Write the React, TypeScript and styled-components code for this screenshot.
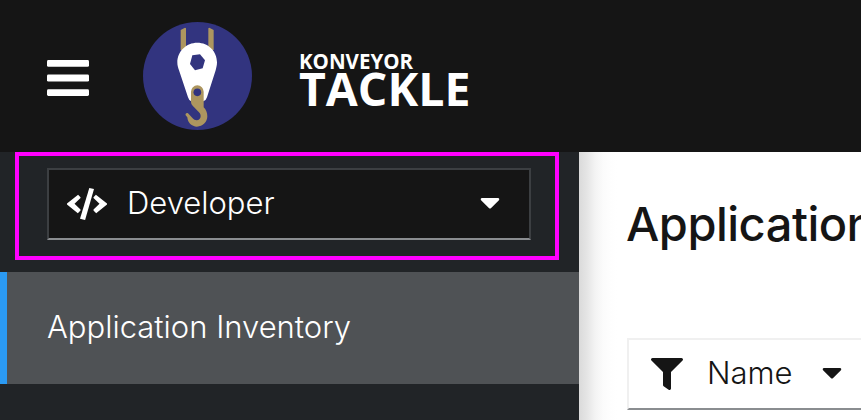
import React from "react";
import styled, { createGlobalStyle } from "styled-components";
import { FaCaretDown, FaFilter } from "react-icons/fa";

const GlobalStyle = createGlobalStyle`
  * { box-sizing: border-box; }
  body { margin: 0; overflow: hidden; background: #fff; }
`;

const Page = styled.div`
  width: 861px;
  height: 420px;
  display: flex;
  flex-direction: column;
  overflow: hidden;
  font-family: Inter, "Open Sans", sans-serif;
  color: #151515;
`;

const Masthead = styled.header`
  height: 152px;
  flex: none;
  display: flex;
  align-items: center;
  padding: 0 0 0 47px;
  background: #151515;
  color: #fff;
`;

const MenuButton = styled.button`
  display: flex;
  padding: 0;
  margin: 4px 54px 0 0;
  border: 0;
  background: none;
  color: inherit;
`;

const Brand = styled.div`
  display: flex;
  align-items: center;
  gap: 47px;
`;

const Wordmark = styled.div`
  display: flex;
  flex-direction: column;
  padding-top: 2px;
  font-family: "Open Sans", "Noto Sans", sans-serif;
  font-weight: 700;
`;

const Project = styled.span`
  font-size: 20.5px;
  line-height: 21px;
`;

const Product = styled.span`
  font-size: 46.4px;
  line-height: 32px;
`;

const Body = styled.div`
  flex: 1;
  display: flex;
  min-height: 0;
`;

const Sidebar = styled.aside`
  width: 579px;
  flex: none;
  background: #212427;
`;

const Highlight = styled.div`
  width: 544px;
  height: 108px;
  margin: 0 0 12px 15px;
  padding: 12px 24px 16px 28px;
  border: 4px solid #ff00ff;
`;

const PerspectiveSelect = styled.div`
  height: 72px;
  display: flex;
  align-items: center;
  padding: 0 29px 0 18px;
  border: 2px solid #3c3f42;
  border-bottom-color: #8a8d90;
  background: #151515;
  color: #fff;
`;

const Label = styled.span`
  padding-bottom: 2px;
  font-size: 31px;
  font-weight: 300;
  line-height: 48px;
  white-space: nowrap;
`;

const SelectText = styled(Label)`
  flex: 1;
  margin-left: 20px;
`;

const Caret = styled(FaCaretDown)`
  width: 20px;
  height: 32px;
  flex: none;
  margin-bottom: 4px;
`;

const NavItem = styled.a`
  height: 112px;
  display: flex;
  align-items: center;
  padding-left: 40px;
  border-left: 7px solid #2b9af3;
  background: #4f5255;
  color: #fff;
`;

const Content = styled.main`
  flex: 1;
  min-width: 0;
  overflow: hidden;
  padding: 43px 0 0 47px;
  background: linear-gradient(to right, #dadada 0, #e5e5e5 8px, #f3f3f3 16px, #fbfbfb 24px, #fefefe 32px, #fff 38px);
`;

const Title = styled.h1`
  margin: 0 0 85px;
  font-size: 47px;
  line-height: 58px;
  font-weight: 460;
  white-space: nowrap;
  letter-spacing: -0.5px;
`;

const FilterSelect = styled.div`
  width: 260px;
  height: 72px;
  margin-left: 1px;
  display: flex;
  align-items: center;
  padding-left: 22px;
  border: 2px solid #f0f0f0;
  border-bottom-color: #8a8d90;
  background: #fff;
`;

const FilterIcon = styled(FaFilter)`
  width: 32px;
  height: 32px;
  flex: none;
`;

const FilterText = styled(Label)`
  width: 139px;
  padding-left: 24px;
`;

const MenuIcon = () => (
  <svg width="42" height="36" viewBox="0 0 42 36" fill="currentColor" aria-hidden="true">
    <rect width="42" height="6.8" rx="1.4" />
    <rect y="14.4" width="42" height="7.2" rx="1.4" />
    <rect y="29.2" width="42" height="6.8" rx="1.4" />
  </svg>
);

const TackleLogo = () => (
  <svg width="109" height="108" viewBox="39 36 327 324" aria-hidden="true">
    <ellipse cx="202.5" cy="198" rx="163.5" ry="162" fill="#32347f" />
    <path d="M152 60L165 53L168 55V120H152ZM235 55L238 53L251 60V120H235Z" fill="#ad965f" />
    <path
      d="M202 98C235 98 261 124 261 157C261 166 259 173 257 181L231 262Q228 272 220 274H184Q177 272 174 262L147 181C144 173 142 166 142 157C142 124 169 98 202 98Z"
      fill="#fff"
    />
    <path d="M187 136L210 133L225 151L218 175L195 181L180 162Z" fill="#32347f" />
    <path
      d="M183 245A19 19 0 0 1 221 245V292C228 299 232 308 232 319C232 336 218 350 201 350C185 350 173 338 172 322L167 316C165 311 170 307 174 310L188 325C191 329 195 331 200 331C207 331 212 325 212 318C212 312 208 308 204 304L188 287Q183 282 183 276Z"
      fill="#ad965f"
    />
    <circle cx="202" cy="247" r="11.5" fill="#32347f" />
  </svg>
);

const CodeIcon = () => (
  <svg width="40" height="32" viewBox="0 0 40 32" fill="currentColor" aria-hidden="true">
    <path d="M11.1 6.8L13.5 9.3V10.1L7.5 15.8L13.5 21.6V22.5L10.8 25.2L0 16.4V15.4Z" />
    <path d="M28.9 6.8L26.5 9.3V10.1L32.5 15.8L26.5 21.6V22.5L29.2 25.2L40 16.4V15.4Z" />
    <path d="M22.3 0L27 1.1L18.1 32L13 30.7Z" />
  </svg>
);

export default function App() {
  return (
    <Page>
      <GlobalStyle />
      <Masthead>
        <MenuButton aria-label="Toggle navigation">
          <MenuIcon />
        </MenuButton>
        <Brand>
          <TackleLogo />
          <Wordmark>
            <Project>KONVEYOR</Project>
            <Product>TACKLE</Product>
          </Wordmark>
        </Brand>
      </Masthead>
      <Body>
        <Sidebar>
          <Highlight>
            <PerspectiveSelect>
              <CodeIcon />
              <SelectText>Developer</SelectText>
              <Caret />
            </PerspectiveSelect>
          </Highlight>
          <NavItem>
            <Label>Application Inventory</Label>
          </NavItem>
        </Sidebar>
        <Content>
          <Title>Application inventory</Title>
          <FilterSelect>
            <FilterIcon />
            <FilterText>Name</FilterText>
            <Caret />
          </FilterSelect>
        </Content>
      </Body>
    </Page>
  );
}
